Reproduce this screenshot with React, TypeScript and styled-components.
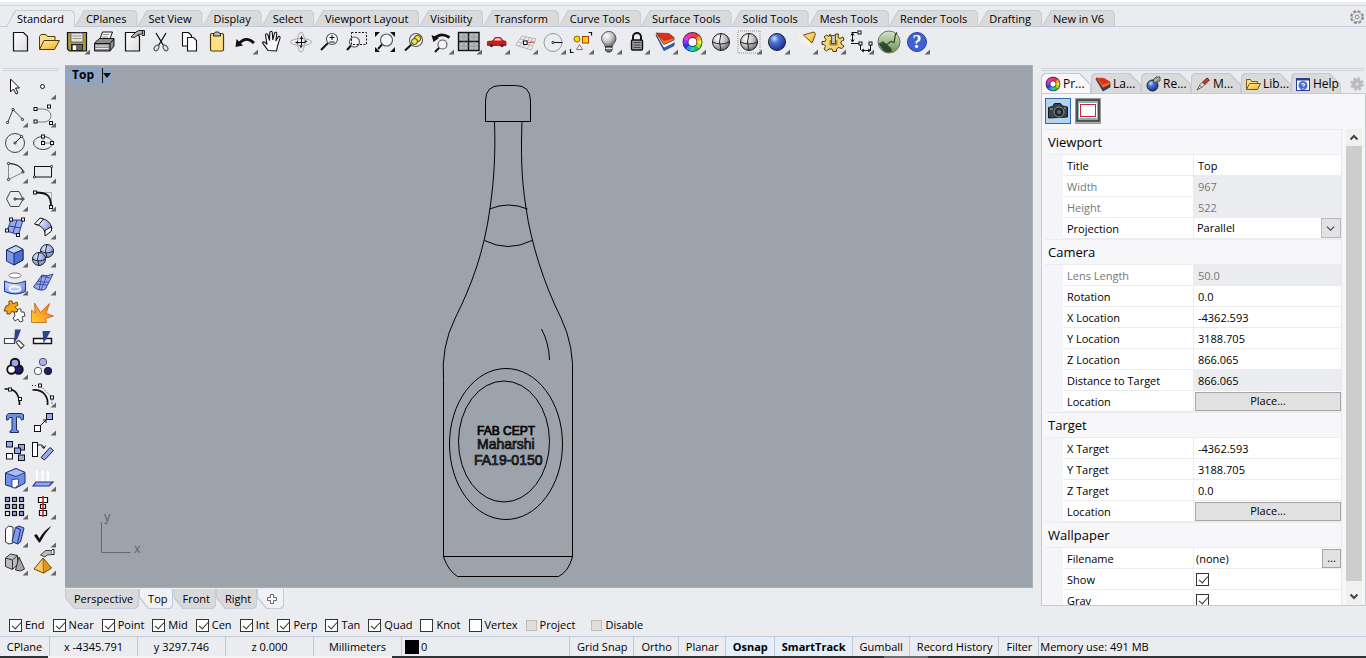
import React from "react";
import styled, { createGlobalStyle } from "styled-components";

const GlobalStyle = createGlobalStyle`
  * { box-sizing: border-box; }
  body { margin: 0; background: #ebecf0; }
  body, button, input, select {
    font-family: "Open Sans", "Noto Sans", sans-serif;
    font-size: 11px;
    line-height: 16px;
    color: #000;
  }
  button { padding: 0; border: 0; background: none; }
`;

/* ---------- shared drawing pieces ---------- */

const K = "#111";
const BLUE = "#93a9f2";

const Node = ({ x, y }: { x: number; y: number }) => (
  <rect x={x - 1.5} y={y - 1.5} width="3" height="3" fill="#fff" stroke={K} />
);

const Dot = ({ x, y }: { x: number; y: number }) => (
  <circle cx={x} cy={y} r="1.1" fill="#fff" stroke={K} strokeWidth=".9" />
);

const Glass = ({ x, y, r = 5.5, hx, hy }: { x: number; y: number; r?: number; hx: number; hy: number }) => (
  <>
    <path d={`M${x - r * 0.7} ${y + r * 0.7}L${hx} ${hy}`} stroke={K} strokeWidth="2" />
    <circle cx={x} cy={y} r={r} fill="#f6f7f9" fillOpacity=".8" stroke="#555" strokeWidth="1.1" />
  </>
);

const WHEEL = ["#f33", "#f93", "#fe3", "#9e2", "#2c4", "#2cc", "#29f", "#33f", "#93f", "#e3e", "#f39", "#f36"];

const Wheel = ({ x, y, r }: { x: number; y: number; r: number }) => {
  const len = (2 * Math.PI * r) / 12;
  return (
    <>
      <circle cx={x} cy={y} r={r} fill="#fff" stroke="#222" strokeWidth={r * 0.62 + 1.6} />
      {WHEEL.map((c, i) => (
        <circle key={c} cx={x} cy={y} r={r} fill="none" stroke={c} strokeWidth={r * 0.62}
          strokeDasharray={`${len + 0.2} ${len * 11}`} transform={`rotate(${i * 30 - 75} ${x} ${y})`} />
      ))}
    </>
  );
};

const Sphere = ({ x, y, r, fill, lines }: { x: number; y: number; r: number; fill: string; lines?: boolean }) => (
  <>
    <circle cx={x} cy={y} r={r} fill={fill} stroke="#222" />
    {lines && (
      <path d={`M${x - r} ${y}Q${x} ${y + 4} ${x + r} ${y}M${x} ${y - r}Q${x - 3} ${y} ${x} ${y + r}`} fill="none" stroke="#222" />
    )}
  </>
);

const Defs = () => (
  <HiddenSvg aria-hidden="true">
    <defs>
      <radialGradient id="gBlue" cx=".35" cy=".3" r=".8">
        <stop offset="0" stopColor="#d4e2ff" /><stop offset=".3" stopColor="#4f78dd" /><stop offset="1" stopColor="#0c2580" />
      </radialGradient>
      <radialGradient id="gSoft" cx=".35" cy=".3" r=".9">
        <stop offset="0" stopColor="#dce4ff" /><stop offset="1" stopColor="#5c78d8" />
      </radialGradient>
      <radialGradient id="gGrey" cx=".35" cy=".3" r=".8">
        <stop offset="0" stopColor="#fff" /><stop offset=".5" stopColor="#c4c4c4" /><stop offset="1" stopColor="#555" />
      </radialGradient>
      <linearGradient id="gDoc" x1="0" y1="0" x2="1" y2="1">
        <stop offset="0" stopColor="#fff" /><stop offset="1" stopColor="#dcdde0" />
      </linearGradient>
      <linearGradient id="gGold" x1="0" y1="0" x2="1" y2="1">
        <stop offset="0" stopColor="#fff3a8" /><stop offset="1" stopColor="#f2a913" />
      </linearGradient>
      <linearGradient id="gFire" x1="1" y1="0" x2="0" y2="1">
        <stop offset="0" stopColor="#f36b18" /><stop offset="1" stopColor="#ffd22e" />
      </linearGradient>
      <linearGradient id="gGlobe" x1="0" y1="0" x2="0" y2="1">
        <stop offset="0" stopColor="#d3e3cb" /><stop offset="1" stopColor="#6a9356" />
      </linearGradient>
    </defs>
  </HiddenSvg>
);

const HiddenSvg = styled.svg`
  position: absolute;
  width: 0;
  height: 0;
`;

type Tool = { label: string; menu?: boolean; art: React.ReactNode };

const docArt = <path d="M6.5 4.5h10l4 4v14.5h-14z" fill="url(#gDoc)" stroke={K} strokeWidth="1.2" />;
const folderArt = (
  <>
    <path d="M4.500 21V8.500l1.500-2h5l1.500 2h7.500v4" fill="#fbe08a" stroke="#4d3a05" />
    <path d="M4.500 21.500L9 12.500h15.500L19.500 21.500z" fill="url(#gGold)" stroke="#4d3a05" />
  </>
);
const handTag = (
  <path d="M12 9l5-5 3-1.500h3.500v3.500l-4 .5-4 3zM22 2.500h3.500v5H23" fill="#b5b5b5" stroke={K} strokeWidth=".9" />
);

const mainTools: Tool[] = [
  { label: "New", art: docArt },
  { label: "Open", art: folderArt },
  {
    label: "Save", menu: true, art: (
      <>
        <path d="M4.500 4.500h19v18.500H6.500l-2-2z" fill="#aa9a45" stroke={K} strokeWidth="1.200" />
        <rect x="8" y="5" width="12" height="9" fill="#e4e4dc" stroke="#555" strokeWidth=".8" />
        <path d="M9.500 8h9M9.500 10.500h9" stroke="#999" />
        <rect x="8.500" y="16.500" width="11" height="6" fill="#666" stroke={K} strokeWidth=".8" />
        <rect x="10" y="17.500" width="3" height="4.500" fill="#fff" />
      </>
    ),
  },
  {
    label: "Print", art: (
      <>
        <path d="M8.500 12l3-8h10l-3 8z" fill="#fff" stroke={K} />
        <path d="M12 6.500h6M11 9h6" stroke="#888" />
        <path d="M3.500 15l5-4.500h14.500v7.500l-4 5H3.500z" fill="#8d8d8d" stroke={K} />
        <path d="M3.500 15.500h15.500l4-4.500M19 15.500V23" fill="none" stroke={K} />
        <path d="M4.500 18h13M4.500 20.500h13" stroke="#eee" strokeWidth="1.200" />
      </>
    ),
  },
  { label: "Document Properties", art: <>{docArt}{handTag}</> },
  {
    label: "Cut", art: (
      <>
        <path d="M9 5l7.500 12.500M19 5l-7.500 12.500" stroke={K} strokeWidth="1.300" />
        <ellipse cx="9.500" cy="20" rx="2" ry="3" transform="rotate(35 9.500 20)" fill="none" stroke="#555" strokeWidth="1.100" />
        <ellipse cx="18.500" cy="20" rx="2" ry="3" transform="rotate(-35 18.500 20)" fill="none" stroke="#555" strokeWidth="1.100" />
      </>
    ),
  },
  {
    label: "Copy", art: (
      <>
        <path d="M7.500 4.500h6l3 3v10.500h-9z" fill="#fff" stroke={K} strokeWidth="1.100" />
        <path d="M12.500 9.500h6l3 3v10.500h-9z" fill="#fff" stroke={K} strokeWidth="1.100" />
      </>
    ),
  },
  {
    label: "Paste", art: (
      <>
        <rect x="7.500" y="5.500" width="13" height="17.500" rx="1.500" fill="#fbe183" stroke="#4a3b08" strokeWidth="1.200" />
        <path d="M10.500 8V6l2-2h3l2 2v2z" fill="#bbb" stroke={K} strokeWidth=".9" />
      </>
    ),
  },
  {
    label: "Undo", menu: true, art: (
      <>
        <path d="M8 15.500Q15 7.500 23 15" fill="none" stroke={K} strokeWidth="2.800" />
        <path d="M4.500 19l1-8 6.500 6.500z" fill={K} />
      </>
    ),
  },
  {
    label: "Pan", art: (
      <path d="M9 22.500C7 19 4.500 17 3.500 14.500c1.500-1.500 3 0 4.500 2L6.500 7c0-1.700 2-1.700 2.500 0l1.500 5.500L10.800 4.500c.2-1.700 2.300-1.700 2.500 0l.5 7.500 1.700-6.800c.5-1.500 2.500-1.200 2.300.5L16.800 13l2.200-4c.9-1.200 2.500-.3 2 1.200l-2.500 8L17.500 23z"
        fill="#f7f7f7" stroke={K} strokeWidth="1.100" />
    ),
  },
  {
    label: "Rotate View", art: (
      <>
        <ellipse cx="14" cy="14" rx="10.500" ry="3.500" fill="none" stroke="#aaa" />
        <ellipse cx="14" cy="14" rx="3.500" ry="10" fill="none" stroke="#aaa" />
        <path d="M14.500 11v6M11 14.500h7" stroke={K} />
        <path d="M13 11l1.500-3.500L16 11zM12.500 17.500l1.500 3 1.500-3zM11 13l-3 1.500 3 1.500zM18 12l2.500 1.500L18 15z" fill={K} />
      </>
    ),
  },
  { label: "Zoom Dynamic", art: <><Glass x={17} y={11} hx={6} hy={22} /><path d="M14.500 9.500h5M17 7v5M14.500 14h5" stroke={K} /></> },
  {
    label: "Zoom Window", art: (
      <><Glass x={11.500} y={14} r={5} hx={4} hy={22} /><rect x="8.500" y="4.500" width="15" height="12" fill="none" stroke={K} strokeDasharray="2 1.500" /></>
    ),
  },
  {
    label: "Zoom Extents", art: (
      <><Glass x={15.500} y={12} r={6} hx={7} hy={21} /><path d="M4 9V4h5zM19 4h5v5zM24 19v5h-5zM9 24H4v-5z" fill={K} /></>
    ),
  },
  {
    label: "Zoom Selected", art: (
      <><Glass x={17} y={12} r={6.500} hx={6} hy={22.500} /><circle cx="18.500" cy="10.500" r="3.200" fill="#f2e63c" stroke={K} strokeWidth=".8" /><circle cx="15.500" cy="13.500" r="3" fill="#f2e63c" stroke={K} strokeWidth=".8" /></>
    ),
  },
  {
    label: "Undo View Change", menu: true, art: (
      <><Glass x={15.500} y={16.500} r={4.500} hx={8} hy={24} /><path d="M8 10Q14 4 22.500 9.500" fill="none" stroke={K} strokeWidth="2.800" /><path d="M4.500 7l2 7 5.500-4z" fill={K} /></>
    ),
  },
  {
    label: "Four Viewports", menu: true, art: (
      <><rect x="3.500" y="4.500" width="20.500" height="18" fill="#b5b7bb" stroke={K} strokeWidth="1.400" /><path d="M13.500 4v19M3 13.500h21" stroke={K} strokeWidth="1.500" /><path d="M5 9h18M5 18h18M9 5v17M19 5v17" stroke="#8b8d91" strokeWidth=".6" /></>
    ),
  },
  {
    label: "Set View", menu: true, art: (
      <><path d="M4.500 13.500l5-.5 2.500-3.500h5.500l2.500 3 3 1v4H4.500z" fill="#d91515" stroke="#7d0707" strokeWidth=".7" /><path d="M11 12.500l1.500-2.200h4.500l1.500 2.200z" fill="#f4cfcf" /><circle cx="8.500" cy="17.500" r="1.700" fill="#333" /><circle cx="19" cy="17.500" r="1.700" fill="#333" /></>
    ),
  },
  {
    label: "Set CPlane", menu: true, art: (
      <><path d="M4.500 17L11 8l14 3-5 11zM8 18.500l7-10M12 20l7-10.500M16 21l6-11M7 14l14 3.500M9 11l14 3" fill="none" stroke="#aaa" strokeWidth=".8" /><path d="M14 15l10-1" stroke="#c55" /><rect x="12.500" y="13" width="3.500" height="3.500" fill="#fff" stroke={K} /></>
    ),
  },
  {
    label: "Circle", menu: true, art: (
      <><circle cx="14" cy="14.500" r="9" fill="none" stroke="#999" /><path d="M14 14.500h9.500" stroke={K} /><Dot x={14} y={14.500} /></>
    ),
  },
  {
    label: "Select", menu: true, art: (
      <>
        <circle cx="10" cy="11" r="3" fill="#ffd900" stroke="#8a6a00" /><rect x="15.500" y="8.500" width="6" height="6.500" fill="#ffd900" stroke="#a33c00" />
        <path d="M9.500 21.500l3-5 3 5z" fill="#fff" stroke="#a66a3a" /><path d="M21.500 4.500h3v3M3.500 21v3.500h3" fill="none" stroke={K} strokeWidth="1.200" />
      </>
    ),
  },
  {
    label: "Hide", menu: true, art: (
      <><path d="M10 18.500c0-3-3.500-4-3.500-8a7.200 7 0 0 1 14.500 0c0 4-3.500 5-3.500 8z" fill="url(#gGrey)" stroke="#555" /><path d="M10.500 18.500h6.500v4l-2 1.500h-2.500l-2-1.500z" fill="#777" stroke="#333" /><path d="M10.500 20.500h6.500" stroke="#ddd" /></>
    ),
  },
  {
    label: "Lock", menu: true, art: (
      <><path d="M10 12V9a4 4 0 0 1 8 0v3" fill="none" stroke={K} strokeWidth="2" /><rect x="8.500" y="12" width="11" height="10" rx="1" fill="#999" stroke={K} strokeWidth="1.400" /><path d="M10.500 14.500h7M10.500 17h7M10.500 19.500h7" stroke="#444" /></>
    ),
  },
  {
    label: "Layers", menu: true, art: (
      <>
        <path d="M5 7L13 22.500L23 17.500V13.500L13 18z" fill="#2f66c4" stroke="#14294f" strokeWidth=".8" />
        <path d="M5 6L13 19.500L23 14.500V12.500L13 17z" fill="#fff" />
        <path d="M5 5L13 16.500L23 12V9.500L13 12.500z" fill="#f4722d" />
        <path d="M5 5L18 5.500L23 9.500L13 12.500z" fill="#e0301a" stroke="#7a1c05" strokeWidth=".6" />
        <path d="M5 5L13 16.500L23 12V9.500" fill="none" stroke="#7a1c05" strokeWidth=".7" />
      </>
    ),
  },
  { label: "Properties", menu: true, art: <Wheel x={13.500} y={14} r={7} /> },
  { label: "Shade", art: <Sphere x={14} y={14} r={8.500} fill="url(#gGrey)" lines /> },
  {
    label: "Render Preview", menu: true, art: (
      <><rect x="3" y="3" width="22" height="22" fill="none" stroke="#bbb" strokeWidth="2" strokeDasharray="1 1" /><Sphere x={14} y={14} r={8.500} fill="url(#gGrey)" lines /></>
    ),
  },
  { label: "Render", menu: true, art: <Sphere x={14} y={14} r={8.500} fill="url(#gBlue)" /> },
  {
    label: "Spotlight", menu: true, art: (
      <><path d="M6 6h8l6 10v4l-10-4z" fill="#f5f0ea" /><path d="M12.500 7L23 4q2 1.500 1 3.500L21 15z" fill="url(#gGold)" stroke="#6e4b08" /></>
    ),
  },
  {
    label: "Options", menu: true, art: (
      <>
        <path d="M11 6l1.500 3h3l1-3h3l-.5 3.500 2 1 3-1.500 1 3-3 1.500V16l3 2-2 2.500-3.500-1-2 1.500v2.500h-3.500l-1-2.500H10l-2.500 2-2.500-2 1.500-2.500-1.500-2H3v-3h3l1-2-2-2.500L7.500 7l2.500 1.500z" fill="#f3d67c" stroke="#4a3505" />
        <path d="M10.500 12h8v5.500h-8z" fill="#a5852f" /><path d="M12.500 7.500h4v8h-4z" fill="#c4c4c4" stroke="#333" strokeWidth=".8" />
      </>
    ),
  },
  {
    label: "Dimension", menu: true, art: (
      <>
        <path d="M4.500 4.500h6M5.500 6v7M4 15.500h9.500v6.500M4 7.500l1.500-2.500L7 7.500M4 11.500L5.500 14 7 11.500M23.500 15.500v7M15 22.500h8M17 21l-2.500 1.500L17 24M21 21l2.500 1.500L21 24" fill="none" stroke={K} />
        <Node x={12.500} y={4.500} /><Node x={13.500} y={15.500} /><Node x={23.500} y={15.500} />
      </>
    ),
  },
  {
    label: "Grasshopper", art: (
      <>
        <circle cx="14" cy="14" r="11" fill="url(#gGlobe)" stroke="#667b60" />
        <path d="M4 16.500q5-3 8 0l4 3.500 1 3.500q-5 2-9-1.500z" fill="#33452b" />
        <path d="M11 17l5-3.500 3 1 1.500-8 1.500-2M4 16l4-2 3 3" fill="none" stroke="#33452b" strokeWidth="1.300" />
      </>
    ),
  },
  {
    label: "Help", menu: true, art: (
      <><circle cx="14" cy="14" r="9.500" fill="#3f62d1" stroke="#2b3f9c" /><text x="14" y="20" textAnchor="middle" fontFamily="Liberation Serif, serif" fontSize="18" fontWeight="700" fill="#fff">?</text></>
    ),
  },
];

const sideTools: Tool[] = [
  { label: "Pointer", art: <path d="M9.500 6v13l3-3 2.500 5 2-1-2.500-5h4z" fill="#fff" stroke={K} /> },
  { label: "Point", menu: true, art: <circle cx="13.500" cy="13.500" r="2" fill="#fff" stroke={K} /> },
  { label: "Polyline", menu: true, art: <><path d="M6.500 22L12 8.500l10 10" fill="none" stroke="#444" /><Dot x={6.500} y={21.500} /><Dot x={12} y={8.500} /><Dot x={21.500} y={18.500} /></> },
  { label: "Curve", menu: true, art: <><path d="M6 8h7c12 0 11 13 2 13H6" fill="none" stroke="#777" /><Node x={6.500} y={8} /><Node x={20} y={5.500} /><Node x={6.500} y={20.500} /><Node x={22} y={22} /></> },
  { label: "Circle", menu: true, art: <><circle cx="14" cy="14" r="9.500" fill="none" stroke="#444" /><path d="M14 14l6-6" stroke={K} /><Dot x={14} y={14} /><Dot x={20.500} y={7.500} /></> },
  { label: "Ellipse", menu: true, art: <><ellipse cx="14" cy="14" rx="9.500" ry="6.500" fill="none" stroke="#444" /><path d="M14 14V7.500M14 14h9.500" stroke="#888" /><Node x={14} y={14} /><Node x={14} y={7.500} /><Node x={23} y={14} /></> },
  { label: "Arc", menu: true, art: <><path d="M7.500 22.500v-16q11 0 15 8.500z" fill="none" stroke="#888" /><path d="M7.500 6.500q11 0 15 8" fill="none" stroke={K} /><Dot x={7.500} y={6.500} /><Dot x={22} y={15} /><Dot x={7.500} y={22.500} /></> },
  { label: "Rectangle", menu: true, art: <><rect x="5.500" y="9.500" width="17" height="10.500" fill="none" stroke={K} /><Dot x={22.500} y={9.500} /><Dot x={5.500} y={20} /></> },
  { label: "Polygon", menu: true, art: <><path d="M5.500 14l4-7.500h8.500l4 7.500-4 7.500H9.500z" fill="none" stroke="#444" /><path d="M14 14h7.500" stroke={K} /><Dot x={14} y={14} /><Dot x={22} y={14} /></> },
  { label: "Fillet", menu: true, art: <><path d="M7 7.500h15.500V21" fill="none" stroke="#aaa" /><path d="M7 7.500c11 0 15 3 15 14" fill="none" stroke={K} strokeWidth="1.800" /><Node x={6} y={7.500} /><Node x={22} y={22} /></> },
  { label: "Surface", menu: true, art: <><path d="M10 7h12l-4.500 15L6 18z" fill={BLUE} stroke="#2d3d80" /><path d="M16 7l-4 13M8 13l12 2" stroke="#2d3d80" /><Node x={10} y={6.500} /><Node x={22} y={6.500} /><Node x={6} y={17.500} /><Node x={17} y={22} /></> },
  { label: "Sweep", menu: true, art: <><path d="M12 5.500q9 1 11 10l-6.500 5Q14 12.500 6.500 11.500z" fill="url(#gSoft)" stroke="#222" /><path d="M11 5l3.500 1-5 6-4-1zM16 17.500l6.500-4v4.500l-6.500 5z" fill="#fff" stroke={K} /></> },
  { label: "Box", menu: true, art: <><path d="M5.500 9L15 4.500l7 4V19l-9 5-7.500-4z" fill="#7f9bec" stroke="#1e2c66" /><path d="M5.500 9L15 4.500l7 4-9 4z" fill="#c5d2fb" stroke="#1e2c66" /><path d="M13 12.500l9-4V19l-9 5z" fill="#4f6fd2" stroke="#1e2c66" /></> },
  { label: "Boolean", menu: true, art: <><Sphere x={18} y={10} r={6.500} fill="url(#gSoft)" lines /><Sphere x={10} y={18} r={6.500} fill="url(#gSoft)" lines /></> },
  { label: "Project Curve", menu: true, art: <><ellipse cx="14" cy="6.500" rx="6" ry="2.500" fill="#fff" stroke="#777" /><path d="M3.500 12q10 5 21 0v10.500q-10 5-21 0z" fill="url(#gSoft)" stroke="#1e3c86" /><ellipse cx="14" cy="20" rx="5.500" ry="2.500" fill="#b7c9fa" stroke="#fff" strokeWidth="1.500" /></> },
  { label: "Surface Edit", menu: true, art: <><path d="M4.500 18L13 6q5 2 11-1l-7.500 15q-5 3-12-2z" fill={BLUE} stroke="#33468c" /><path d="M9 12q5 2 11 1M7 15l11 1M18 6l-6 15M13 6l-3 15M21 9l-9-2" fill="none" stroke="#33468c" strokeWidth=".8" /></> },
  { label: "Explode Puzzle", art: <><path d="M5 9l3-1 0-4 3 0 1 3 4-2 1 3-3 2 3 3-3 3-3-2-2 3-3 0 0-3-3 0z" fill="#f6a318" stroke="#7b4b05" /><path d="M13 15l3 0 1-3 3 0 0 3 3 0 1 4-3 1 1 4-3 1-2-3-3 2-2-3 2-2z" fill="#fff" stroke="#444" /></> },
  { label: "Explode", art: <path d="M2.500 25.500V13l3.500 3-.5-10 6 9.500L20.500 6.500 17 16.500l7.500 2.500-8 2.500 1 4z" fill="url(#gFire)" stroke="#b4570a" strokeWidth=".7" /> },
  { label: "Trim", art: <><path d="M3.500 13.500h10v5h-10zM15 17l3-1.500 5 5-3 3z" fill="#fff" stroke="#444" strokeWidth="1.200" /><path d="M14 4.500h6l-3.500 9-3.500 4z" fill="#2c438e" /></> },
  { label: "Split", art: <><path d="M4.500 13.500h18v5h-18z" fill="#fff" stroke={K} strokeWidth="1.400" /><path d="M13.500 6h8l-4 7.500-3 5z" fill="#2c438e" /></> },
  { label: "Group", menu: true, art: <><g fill={K} stroke={K} strokeWidth="4"><circle cx="14" cy="10" r="3.200" /><circle cx="10.500" cy="16.500" r="3.200" /><circle cx="17.500" cy="16.500" r="3.200" /></g><circle cx="10.500" cy="16.500" r="3.300" fill="#fff" /><circle cx="17.500" cy="16.500" r="3.300" fill="#221c6e" /><circle cx="14" cy="10" r="3.300" fill="#9ba2ee" /></> },
  { label: "Ungroup", art: <><circle cx="14" cy="9" r="3.700" fill="#a9b0f2" stroke="#555" /><circle cx="9" cy="18" r="3.700" fill="#fff" stroke="#555" /><circle cx="19" cy="18" r="3.700" fill="#221c6e" stroke="#222" /></> },
  { label: "Edit Points", art: <><path d="M3.500 8h5q10 2 10 16" fill="none" stroke={K} strokeWidth="1.700" /><Node x={9} y={8.500} /><Node x={19} y={18} /></> },
  { label: "Control Points", menu: true, art: <><path d="M3.500 9c10-1 16 6 15 15" fill="none" stroke={K} strokeWidth="1.700" /><path d="M3 4.500h8l12 12v7" fill="none" stroke={K} strokeDasharray="1 2" /><Node x={11} y={4.500} /><Node x={23} y={16.500} /></> },
  { label: "Text", art: <path d="M5.500 6.500l2-2h13l2 1v5l-2 .5-1.500-3h-3.500v13l2 1v1.500H9V22l2-1V8.500H8.500L7 11H5.500z" fill="#6d90e4" stroke="#1d2d62" /> },
  { label: "Move", menu: true, art: <><path d="M11 17l6-6M17 14v-3h-3" fill="none" stroke={K} /><rect x="5.500" y="16.500" width="6" height="6" fill="#fff" stroke={K} /><rect x="17.500" y="4.500" width="6" height="6" fill={BLUE} stroke={K} /></> },
  { label: "Copy Objects", art: <>{[[5.500, 4.500], [17.500, 7.500], [13.500, 11], [17.500, 18]].map(([x, y]) => <rect key={`${x}${y}`} x={x} y={y} width="6" height="5.500" fill={BLUE} stroke={K} />)}<rect x="5.500" y="16.500" width="6" height="5.500" fill="#fff" stroke={K} /></> },
  { label: "Rotate", art: <><rect x="3.500" y="5.500" width="5" height="14" fill="#fff" stroke={K} /><path d="M9 8q5-1 6 3M12.500 9.500l2.500 2 1.500-3" fill="none" stroke={K} /><path d="M12 20.500l9-10 3.500 3-9 9.500z" fill={BLUE} stroke="#222" /></> },
  { label: "Solid Edit", menu: true, art: <><path d="M4.500 8L15 3.500l9 4V18l-9 5-10.500-3z" fill="#6d8fe6" stroke="#1e2c66" /><path d="M4.500 8L15 3.500l9 4-9 4z" fill="#a9bcf6" stroke="#1e2c66" strokeWidth=".8" /><path d="M11 14.500l6.500-.5v6l-3.500 3-3-.5z" fill="#fff" stroke="#1e2c66" strokeWidth=".8" /></> },
  { label: "Extrude", menu: true, art: <><path d="M8 17V6M13.500 17V6M19 17V6" stroke="#fff" strokeWidth="1.800" /><path d="M6 9l2-4 2 4zM11.500 9l2-4 2 4zM17 9l2-4 2 4z" fill="#fff" /><path d="M4 21l3-4h17l-4 4z" fill={BLUE} stroke="#1c3488" strokeWidth="1.200" /></> },
  { label: "Array", menu: true, art: <>{[4.500, 11.500, 18.500].flatMap((x) => [4.500, 11.500, 18.500].map((y) => <rect key={`${x}${y}`} x={x} y={y} width="4" height="4" fill={x === 4.500 && y === 18.500 ? "#fff" : BLUE} stroke={K} strokeWidth="1.200" />))}</> },
  { label: "Align", menu: true, art: <><path d="M9.500 4.500h9v5h-9zM11.500 11.500h5v4h-5zM10.500 17.500h7v5h-7z" fill="#fff" stroke={K} strokeWidth="1.200" /><path d="M14 3v21" stroke="#cc1f1f" strokeWidth="1.600" /></> },
  { label: "Bend", menu: true, art: <><path d="M4.500 8l3-3 4.500 1v16l-4 1-3.500-2z" fill="#fff" stroke="#333" /><path d="M11 20.500l3.500-14L18 5l5 2-3.500 14-3 2z" fill="#7f9cec" stroke="#1e2c66" /><path d="M14.500 6.500l5 2-3 14" fill="none" stroke="#1e2c66" /></> },
  { label: "Check", menu: true, art: <path d="M5 14.500l2.500-1.500 3 4.500Q15 9 22.500 5 16 12 11 21.500H10z" fill={K} /> },
  { label: "Solids", menu: true, art: <><path d="M4.500 9l5-4 7 1.500v9l-5 5-7-3z" fill="#bbb" stroke="#333" /><path d="M4.500 9l7 2 5-4.500M11.500 11v9.500" fill="none" stroke="#333" /><path d="M18 8l5.500 12q-4 3.500-9 1z" fill="#a6a6a6" stroke="#333" /></> },
  { label: "Pyramid Edit", menu: true, art: <><path d="M14 9l8.500 10-8 5-9.500-4z" fill="#fbc75e" stroke="#6e4a0b" /><path d="M14 9l.5 15 8-5z" fill="#e19a26" stroke="#6e4a0b" strokeWidth=".7" /><path d="M11.500 6l5-4.500h6.500v4l-5 .5-2 2z" fill="#bbb" stroke="#222" strokeWidth=".8" /><path d="M23 .5h2v5h-2" fill="#fff" stroke={K} /></> },
];

/* ---------- layout ---------- */

const Shell = styled.div`
  height: 100vh;
  display: flex;
  flex-direction: column;
  background: #ebecf0;
  overflow: hidden;
`;

const TopEdge = styled.div`
  height: 6px;
  border-top: 2px solid #fff;
  border-bottom: 1px solid #d3d7e2;
  flex: none;
`;

const RibbonTabs = styled.nav`
  display: flex;
  align-items: flex-end;
  height: 21px;
  padding-left: 6px;
  border-bottom: 1px solid #c3cad9;
  flex: none;
`;

const RibbonTab = styled.button<{ $active?: boolean }>`
  position: relative;
  z-index: 0;
  height: ${(p) => (p.$active ? 17 : 16)}px;
  margin-bottom: ${(p) => (p.$active ? -1 : 0)}px;
  padding: 1px 11px 0;
  white-space: nowrap;
  &::before, &::after {
    content: "";
    position: absolute;
    z-index: -1;
    clip-path: polygon(0 100%, 9px 0, calc(100% - 3px) 0, 100% 3px, 100% 100%);
  }
  &::before { inset: 0; background: #c6ccd8; }
  &::after { inset: 1px 1px 0 1px; background: ${(p) => (p.$active ? "#ebecf0" : "#dadada")}; }
`;

const GearButton = styled.button`
  margin-left: auto;
  width: 18px;
  height: 18px;
  svg { display: block; }
`;

const Toolbar = styled.div`
  display: flex;
  height: 38px;
  padding: 1px 0 0 7px;
  flex: none;
`;

const ToolButton = styled.button`
  width: 28px;
  height: 28px;
  flex: none;
  svg { display: block; }
`;

const Body = styled.div`
  display: flex;
  flex: 1;
  min-height: 0;
`;

const SideBar = styled.aside`
  width: 65px;
  padding: 3px 0 0 1px;
  flex: none;
`;

const Grip = styled.div`
  height: 3px;
  margin: 0 6px 2px 2px;
  border: 1px solid #cfd4de;
  border-width: 1px 0;
`;

const SideGrid = styled.div`
  display: grid;
  grid-template-columns: 28px 28px;
  grid-auto-rows: 28px;
`;

const Center = styled.main`
  display: flex;
  flex-direction: column;
  flex: 1;
  min-width: 0;
`;

const Viewport = styled.section`
  position: relative;
  flex: 1;
  min-height: 0;
  overflow: hidden;
  background: #9da3ab;
  border: 1px solid #a9b1bd;
  border-width: 1px 1px 1px 0;
`;

const ViewportDrawing = styled.svg`
  display: block;
`;

const ViewportTitle = styled.button`
  position: absolute;
  top: 1px;
  left: 1px;
  display: flex;
  align-items: center;
  height: 16px;
  padding-left: 6px;
  background: #8fa5c2;
  font-size: 12px;
  font-weight: 700;
  svg { margin-left: 6px; }
`;

const ViewTabs = styled.nav`
  display: flex;
  height: 23px;
  padding-top: 1px;
  flex: none;
`;

const ViewTab = styled.button<{ $active?: boolean }>`
  position: relative;
  z-index: 0;
  height: 20px;
  padding: 0 6px 0 9px;
  white-space: nowrap;
  &::before, &::after {
    content: "";
    position: absolute;
    z-index: -1;
    clip-path: polygon(0 0, 100% 0, 100% calc(100% - 3px), calc(100% - 3px) 100%, 9px 100%, 0 calc(100% - 11px));
  }
  &::before { inset: 0; background: #c3cad8; }
  &::after { inset: 0 1px 1px 1px; background: ${(p) => (p.$active ? "#f1f2f5" : "#d9d9da")}; }
  svg { display: block; }
`;

const Panel = styled.aside`
  display: flex;
  flex-direction: column;
  width: 325px;
  margin: 3px 0 5px 8px;
  flex: none;
`;

const PanelGrip = styled(Grip)`
  margin: 0 2px 2px 0;
  flex: none;
`;

const PanelTabs = styled.div`
  display: flex;
  height: 20px;
  flex: none;
`;

const PanelTab = styled.button<{ $active?: boolean }>`
  position: relative;
  z-index: 0;
  display: flex;
  align-items: center;
  gap: 2px;
  width: 50px;
  padding: 2px 0 0 4px;
  font-size: 12px;
  white-space: nowrap;
  &::before, &::after {
    content: "";
    position: absolute;
    z-index: -1;
    clip-path: polygon(0 3px, 3px 0, calc(100% - 11px) 0, 100% 11px, 100% 100%, 0 100%);
  }
  &::before { inset: 0; background: #c3cad8; }
  &::after { inset: 1px 1px 0 1px; background: ${(p) => (p.$active ? "#f7f7f9" : "#dadada")}; }
  svg { flex: none; }
`;

const PanelBox = styled.div`
  display: flex;
  flex-direction: column;
  flex: 1;
  min-height: 0;
  padding-left: 3px;
  border: 1px solid #c3cad8;
  background: #f7f7f9;
`;

const PageButtons = styled.div`
  display: flex;
  gap: 4px;
  height: 35px;
  padding-top: 4px;
  flex: none;
`;

const PageButton = styled.button<{ $active?: boolean }>`
  width: 26px;
  height: 26px;
  border: 1px solid ${(p) => (p.$active ? "#2f6bad" : "#999")};
  background: ${(p) => (p.$active ? "#b6d3ee" : "#b0b0b0")};
  svg { display: block; }
`;

const ScrollArea = styled.div`
  display: flex;
  flex: 1;
  min-height: 0;
`;

const GridClip = styled.div`
  flex: 1;
  min-width: 0;
  overflow: hidden;
`;

const PropTable = styled.table`
  width: 100%;
  table-layout: fixed;
  border-collapse: separate;
  border-spacing: 0;
  border-right: 1px solid #e6e8ed;
`;

const GutterCol = styled.col` width: 18px; `;
const LabelCol = styled.col` width: 130px; `;

const GroupHead = styled.th`
  height: 26px;
  padding: 0 0 0 3px;
  border-top: 1px solid #eaecf0;
  border-bottom: 1px solid #eaecf0;
  background: #f7f7f9;
  font-size: 13px;
  font-weight: 400;
  text-align: left;
`;

const Gutter = styled.td`
  height: 21px;
  padding: 0;
  background: #f4f5f9;
`;

const LabelCell = styled.th<{ $muted?: boolean }>`
  height: 21px;
  padding: 1px 0 0 4px;
  border-bottom: 1px solid #eaecf0;
  background: #fff;
  font-weight: 400;
  text-align: left;
  white-space: nowrap;
  color: ${(p) => (p.$muted ? "#777" : "#000")};
`;

const ValueCell = styled.td<{ $shade?: boolean }>`
  height: 21px;
  padding: 0;
  border-bottom: 1px solid ${(p) => (p.$shade ? "#ebecf0" : "#eaecf0")};
  border-left: 1px solid #eaecf0;
  background: ${(p) => (p.$shade ? "#ebecf0" : "#fff")};
`;

const ValueInput = styled.input<{ $muted?: boolean }>`
  display: block;
  width: 100%;
  height: 20px;
  padding: 0 4px;
  border: 0;
  background: transparent;
  color: ${(p) => (p.$muted ? "#777" : "#000")};
`;

const FileInput = styled(ValueInput)`
  flex: 1;
  min-width: 0;
  padding: 0 2px;
`;

const ValueRow = styled.div`
  position: relative;
  display: flex;
  align-items: center;
  height: 20px;
`;

const ValueSelect = styled.select`
  appearance: none;
  width: 100%;
  height: 20px;
  padding: 0 3px;
  border: 0;
  background: transparent;
`;

const SelectArrow = styled.svg`
  position: absolute;
  right: 0;
  top: 0;
  pointer-events: none;
  border: 1px solid #b9b9b9;
  background: #e2e2e4;
`;

const PlaceButton = styled.button`
  display: block;
  width: calc(100% - 1px);
  height: 19px;
  margin-left: 1px;
  border: 1px solid #a5a5a5;
  background: #e1e1e1;
`;

const BrowseButton = styled.button`
  width: 19px;
  height: 19px;
  flex: none;
  border: 1px solid #a5a5a5;
  background: #e1e1e1;
`;

const ScrollBar = styled.div`
  display: flex;
  flex-direction: column;
  width: 16px;
  margin: 0 3px 0 4px;
  background: #f0f0f1;
`;

const ScrollThumb = styled.div`
  flex: 1;
  background: #cdcdcd;
`;

const ScrollArrow = styled.button`
  height: 17px;
  svg { display: block; }
  &:last-child { height: 24px; }
`;

const SnapBar = styled.div`
  display: flex;
  align-items: center;
  gap: 8px;
  height: 25px;
  padding: 3px 0 0 9px;
  flex: none;
`;

const SnapLabel = styled.label<{ $wide?: boolean }>`
  display: flex;
  align-items: center;
  gap: 3px;
  margin-right: ${(p) => (p.$wide ? 8 : 0)}px;
  white-space: nowrap;
`;

const Tick = styled.input<{ $inset?: boolean }>`
  appearance: none;
  position: relative;
  width: 13px;
  height: 13px;
  margin: 0 0 0 ${(p) => (p.$inset ? 2 : 0)}px;
  border: 1px solid #333;
  background: #fff;
  flex: none;
  &:checked::after {
    content: "";
    position: absolute;
    left: 4px;
    top: 0;
    width: 4px;
    height: 8px;
    border: solid #333;
    border-width: 0 1px 1px 0;
    transform: rotate(42deg);
  }
  &:disabled { width: 11px; height: 11px; border-color: #bdbdbd; background: #dededf; }
`;

const StatusBar = styled.footer`
  display: flex;
  height: 20px;
  border-top: 1px solid #c3cad9;
  flex: none;
`;

const BottomEdge = styled.div`
  height: 2px;
  flex: none;
  background: linear-gradient(to right, #303336 48px, #f4f4f4 48px 392px, #303336 392px 884px, #6c6f72 884px 928px, #303336 928px);
`;

const StatusPane = styled.div<{ $w?: number; $align?: string }>`
  display: flex;
  align-items: center;
  justify-content: ${(p) => p.$align ?? "center"};
  width: ${(p) => p.$w ?? 88}px;
  border-right: 1px solid #c3c8d6;
  white-space: nowrap;
`;

const StatusToggle = styled.button<{ $on?: boolean }>`
  padding: 0 6px 0 7px;
  border-right: 1px solid #c3c8d6;
  background: ${(p) => (p.$on ? "#e3effb" : "transparent")};
  font-weight: ${(p) => (p.$on ? 700 : 400)};
  white-space: nowrap;
`;

const LayerSwatch = styled.span`
  width: 14px;
  height: 14px;
  margin: 0 2px 0 3px;
  background: #000;
`;

const Memory = styled.span`
  padding: 2px 0 0 1px;
  white-space: nowrap;
`;

/* ---------- components ---------- */

const ToolIcon = ({ tool }: { tool: Tool }) => (
  <ToolButton aria-label={tool.label} title={tool.label}>
    <svg width="28" height="28" viewBox="0 0 28 28" fill="none">
      {tool.art}
      {tool.menu && <path d="M27 21.500V26.500H21.500z" fill="#666" />}
    </svg>
  </ToolButton>
);

const Gear = ({ solid }: { solid?: boolean }) => (
  <svg width="18" height="18" viewBox="0 0 18 18" fill="none">
    {solid ? (
      <>
        <circle cx="9" cy="11" r="5" fill="#bbb" />
        <circle cx="9" cy="11" r="5.500" stroke="#bbb" strokeWidth="2.500" strokeDasharray="2.500 1.820" />
        <circle cx="9" cy="11" r="1.500" fill="#ddd" />
      </>
    ) : (
      <>
        <circle cx="9" cy="9" r="6" stroke="#888" strokeWidth="1.800" strokeDasharray="3 1.710" />
        <circle cx="9" cy="9" r="4.800" fill="#ebecf0" stroke="#999" strokeWidth=".8" />
        <circle cx="9" cy="9" r="2" stroke="#888" />
      </>
    )}
  </svg>
);

const Bottle = () => (
  <ViewportDrawing width="967" height="522" viewBox="65 66 967 522" fill="none" stroke="#000">
    <path d="M485.500 121.500V101q0-15.500 15-15.500h15q15 0 15 15.500v20.500z" strokeLinejoin="round" />
    <path d="M494.500 121.500c1 30 0 55-4.500 87-6 43-18 76-35 110q-14 28-11.500 62v176.500q5 14 14 19.500h101q10-5 14-19.500V380q2-34-11.500-62c-17-34-30-75-35-110-5-32-5-57-4-86.500" />
    <path d="M443.500 556.500h129M489.500 209q19-8 38 0M484.500 240.500q23.500 12 47.500 0M541.500 329q7.500 14 8 31" />
    <ellipse cx="506" cy="444" rx="56.500" ry="75.500" />
    <ellipse cx="504" cy="441.500" rx="45.500" ry="60.500" />
    <g fill="#000" strokeWidth=".7" fontFamily="Liberation Sans, Arial, sans-serif">
      <text x="477" y="435" fontSize="12">FAB CEPT</text>
      <text x="477" y="449" fontSize="14" fill="#4c5056">Maharshi</text>
      <text x="474" y="465" fontSize="14" fill="#4c5056">FA19-0150</text>
    </g>
    <path d="M101.500 522v30.500h29" stroke="#62676e" />
    <g fill="#62676e" stroke="none" fontFamily="Liberation Sans, Arial, sans-serif" fontSize="13">
      <text x="104" y="521">y</text>
      <text x="134" y="553">x</text>
    </g>
  </ViewportDrawing>
);

const ribbon = ["Standard", "CPlanes", "Set View", "Display", "Select", "Viewport Layout", "Visibility", "Transform", "Curve Tools",
  "Surface Tools", "Solid Tools", "Mesh Tools", "Render Tools", "Drafting", "New in V6"];

const panelTabs: { text: string; art: React.ReactNode }[] = [
  { text: "Pr...", art: <Wheel x={8} y={8} r={5} /> },
  { text: "La...", art: <><path d="M1 3L8 15l7-4V8l-7 3.500z" fill="#2a4377" stroke="#222" strokeWidth=".7" /><path d="M1 2l8 .5 6 3.500v2.500L8 12z" fill="#f4722d" stroke="#7a1c05" strokeWidth=".6" /><path d="M1 2l8 .5 6 3.500-7 3z" fill="#e0301a" /></> },
  { text: "Re...", art: <><Sphere x={7.500} y={9.500} r={5.500} fill="url(#gBlue)" /><path d="M8 4l3-3h4v4l-3 .5-2 2z" fill="#aaa" stroke="#222" strokeWidth=".7" /></> },
  { text: "M...", art: <><path d="M2 14l3-5 2 2z" fill="#fff" stroke="#333" strokeWidth=".8" /><path d="M4.500 9l3-3 2.500 2.500-3 3z" fill="#ddd" stroke="#555" strokeWidth=".8" /><path d="M7.500 6L12 2l2.500 2L10 8.500z" fill="#b2452f" stroke="#5a1c10" strokeWidth=".8" /></> },
  { text: "Lib...", art: <><path d="M1.500 13.500V3.500h4l1 2h6v2" fill="#fbe08a" stroke="#7b5b0b" /><path d="M1.500 13.500l3-6h11l-3 6z" fill="url(#gGold)" stroke="#7b5b0b" /></> },
  { text: "Help", art: <><rect x="1.500" y="2.500" width="13" height="12" fill="#fff" stroke="#2c3f8f" /><path d="M1.500 3.500h13" stroke="#2c3f8f" strokeWidth="2" /><circle cx="8" cy="9.500" r="4.500" fill="#4d6cd6" /><path d="M6.500 8.500q1.500-2 3 0-.2 1.300-1.500 1.700M8 12v.7" stroke="#fff" strokeWidth="1.200" /></> },
];

type Prop = { label: string; value?: string; kind?: "select" | "place" | "file" | "tick"; muted?: boolean; shade?: boolean };

const groups: { title: string; rows: Prop[] }[] = [
  {
    title: "Viewport", rows: [
      { label: "Title", value: "Top" },
      { label: "Width", value: "967", muted: true, shade: true },
      { label: "Height", value: "522", muted: true, shade: true },
      { label: "Projection", value: "Parallel", kind: "select" },
    ],
  },
  {
    title: "Camera", rows: [
      { label: "Lens Length", value: "50.0", muted: true, shade: true },
      { label: "Rotation", value: "0.0" },
      { label: "X Location", value: "-4362.593" },
      { label: "Y Location", value: "3188.705" },
      { label: "Z Location", value: "866.065" },
      { label: "Distance to Target", value: "866.065", shade: true },
      { label: "Location", kind: "place" },
    ],
  },
  {
    title: "Target", rows: [
      { label: "X Target", value: "-4362.593" },
      { label: "Y Target", value: "3188.705" },
      { label: "Z Target", value: "0.0" },
      { label: "Location", kind: "place" },
    ],
  },
  {
    title: "Wallpaper", rows: [
      { label: "Filename", value: "(none)", kind: "file" },
      { label: "Show", kind: "tick" },
      { label: "Gray", kind: "tick" },
    ],
  },
];

const PropEditor = ({ id, row }: { id: string; row: Prop }) => {
  switch (row.kind) {
    case "select":
      return (
        <ValueRow>
          <ValueSelect id={id} defaultValue={row.value}>
            <option>Parallel</option>
            <option>Perspective</option>
          </ValueSelect>
          <SelectArrow width="20" height="20" viewBox="0 0 20 20" fill="none">
            <path d="M5.500 8.500l4 4 4-4" stroke="#444" strokeWidth="1.200" />
          </SelectArrow>
        </ValueRow>
      );
    case "place":
      return <PlaceButton id={id}>Place...</PlaceButton>;
    case "file":
      return (
        <ValueRow>
          <FileInput id={id} defaultValue={row.value} />
          <BrowseButton aria-label="Browse for file">...</BrowseButton>
        </ValueRow>
      );
    case "tick":
      return <ValueRow><Tick id={id} type="checkbox" defaultChecked $inset /></ValueRow>;
    default:
      return <ValueInput id={id} defaultValue={row.value} $muted={row.muted} readOnly={row.shade} />;
  }
};

const snaps = ["End", "Near", "Point", "Mid", "Cen", "Int", "Perp", "Tan", "Quad", "Knot", "Vertex", "Project", "Disable"];

const toggles: { text: string; on?: boolean }[] = [
  { text: "Grid Snap" }, { text: "Ortho" }, { text: "Planar" }, { text: "Osnap", on: true },
  { text: "SmartTrack", on: true }, { text: "Gumball" }, { text: "Record History" }, { text: "Filter" },
];

export default function App() {
  return (
    <Shell>
      <GlobalStyle />
      <Defs />
      <TopEdge />
      <RibbonTabs>
        {ribbon.map((t, i) => <RibbonTab key={t} $active={i === 0}>{t}</RibbonTab>)}
        <GearButton aria-label="Toolbar options"><Gear /></GearButton>
      </RibbonTabs>
      <Toolbar>
        {mainTools.map((t) => <ToolIcon key={t.label} tool={t} />)}
      </Toolbar>
      <Body>
        <SideBar>
          <Grip />
          <SideGrid>
            {sideTools.map((t) => <ToolIcon key={t.label} tool={t} />)}
          </SideGrid>
        </SideBar>
        <Center>
          <Viewport>
            <Bottle />
            <ViewportTitle>
              Top
              <svg width="12" height="15" viewBox="0 0 12 15"><path d="M2.500 0v15" stroke="#111" /><path d="M3 5h8l-4 5z" fill="#111" /></svg>
            </ViewportTitle>
          </Viewport>
          <ViewTabs>
            <ViewTab>Perspective</ViewTab>
            <ViewTab $active>Top</ViewTab>
            <ViewTab>Front</ViewTab>
            <ViewTab>Right</ViewTab>
            <ViewTab $active aria-label="Add viewport">
              <svg width="12" height="12" viewBox="0 0 12 12"><path d="M4.500 1.500h3v3h3v3h-3v3h-3v-3h-3v-3h3z" fill="#fff" stroke="#666" /></svg>
            </ViewTab>
          </ViewTabs>
        </Center>
        <Panel>
          <PanelGrip />
          <PanelTabs>
            {panelTabs.map((t, i) => (
              <PanelTab key={t.text} $active={i === 0}>
                <svg width="16" height="16" viewBox="0 0 16 16" fill="none">{t.art}</svg>
                {t.text}
              </PanelTab>
            ))}
            <GearButton aria-label="Panel options"><Gear solid /></GearButton>
          </PanelTabs>
          <PanelBox>
            <PageButtons>
              <PageButton $active aria-label="Camera properties">
                <svg width="24" height="24" viewBox="0 0 24 24" fill="none">
                  <path d="M2.500 8.500l4-1 2-3h6l2 2.500 5 1v10l-19 1z" fill="#3c4147" stroke="#16191c" />
                  <circle cx="13" cy="13" r="5" fill="#20262b" stroke="#8a9299" />
                  <circle cx="13" cy="13" r="2" fill="#5d6b78" />
                  <path d="M4 10h3M18 9h2" stroke="#a7afb6" />
                </svg>
              </PageButton>
              <PageButton aria-label="Viewport frame">
                <svg width="24" height="24" viewBox="0 0 24 24" fill="none">
                  <rect x="1" y="1" width="22" height="21" fill="#8fb3b5" stroke="#333" strokeWidth="1.500" />
                  <rect x="3" y="4" width="18" height="15" fill="#fff" />
                  <rect x="4.500" y="5.500" width="15" height="12" stroke="#c4283c" />
                </svg>
              </PageButton>
            </PageButtons>
            <ScrollArea>
              <GridClip>
                <PropTable>
                  <colgroup><GutterCol /><LabelCol /><col /></colgroup>
                  {groups.map((g) => (
                    <tbody key={g.title}>
                      <tr><GroupHead colSpan={3} scope="rowgroup">{g.title}</GroupHead></tr>
                      {g.rows.map((r) => {
                        const id = `${g.title}-${r.label}`.replace(/ /g, "-").toLowerCase();
                        return (
                          <tr key={r.label}>
                            <Gutter />
                            <LabelCell $muted={r.muted} scope="row"><label htmlFor={id}>{r.label}</label></LabelCell>
                            <ValueCell $shade={r.shade}><PropEditor id={id} row={r} /></ValueCell>
                          </tr>
                        );
                      })}
                    </tbody>
                  ))}
                </PropTable>
              </GridClip>
              <ScrollBar>
                <ScrollArrow aria-label="Scroll up">
                  <svg width="16" height="17" viewBox="0 0 16 17" fill="none"><path d="M4.500 10.500L8 7l3.500 3.500" stroke="#444" strokeWidth="2" /></svg>
                </ScrollArrow>
                <ScrollThumb />
                <ScrollArrow aria-label="Scroll down">
                  <svg width="16" height="24" viewBox="0 0 16 24" fill="none"><path d="M4.500 13.500L8 17l3.500-3.500" stroke="#444" strokeWidth="2" /></svg>
                </ScrollArrow>
              </ScrollBar>
            </ScrollArea>
          </PanelBox>
        </Panel>
      </Body>
      <SnapBar>
        {snaps.map((s, i) => (
          <SnapLabel key={s} $wide={s === "Project"}>
            <Tick type="checkbox" defaultChecked={i < 9} disabled={i > 10} />
            {s}
          </SnapLabel>
        ))}
      </SnapBar>
      <StatusBar>
        <StatusPane $w={50}>CPlane</StatusPane>
        <StatusPane>x -4345.791</StatusPane>
        <StatusPane>y 3297.746</StatusPane>
        <StatusPane>z 0.000</StatusPane>
        <StatusPane>Millimeters</StatusPane>
        <StatusPane $w={168} $align="flex-start"><LayerSwatch />0</StatusPane>
        {toggles.map((t) => <StatusToggle key={t.text} $on={t.on}>{t.text}</StatusToggle>)}
        <Memory>Memory use: 491 MB</Memory>
      </StatusBar>
      <BottomEdge />
    </Shell>
  );
}
